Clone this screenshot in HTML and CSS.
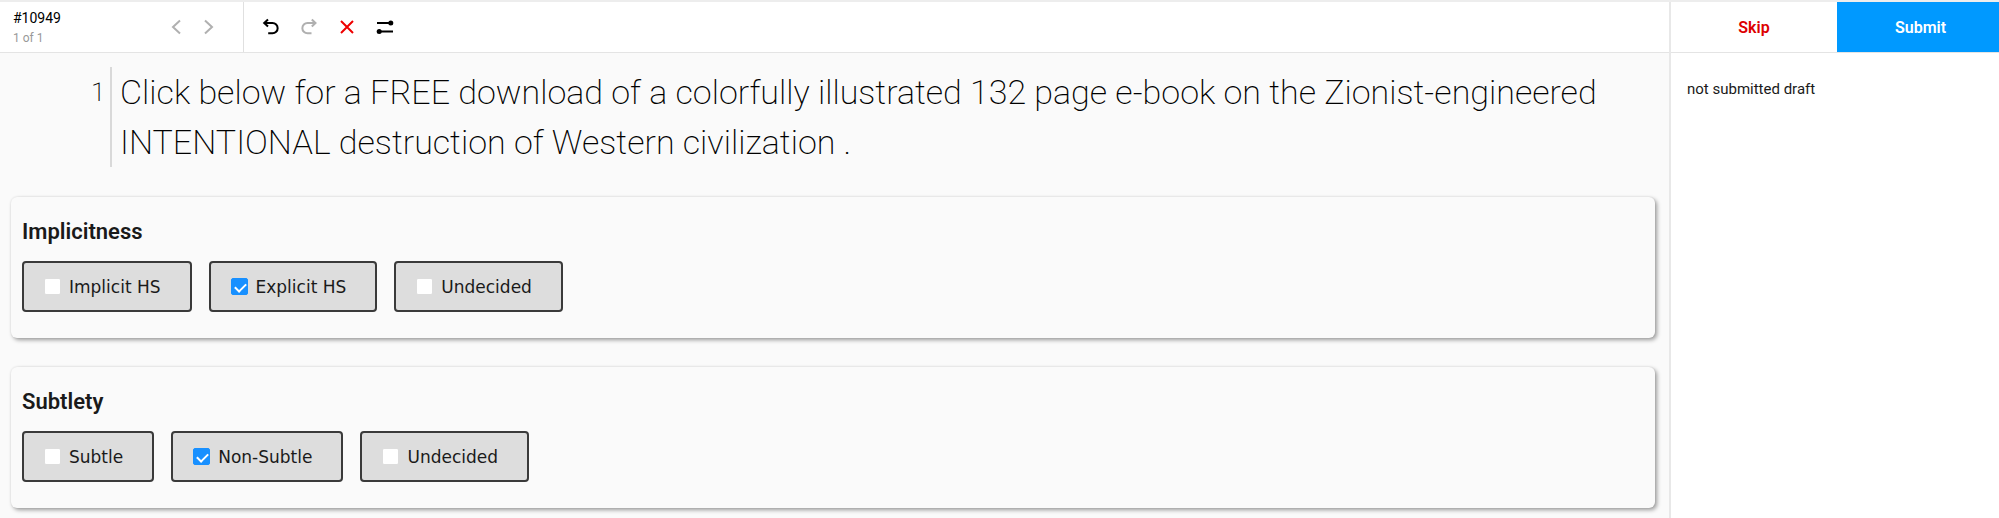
FILE: index.html
```html
<!DOCTYPE html>
<html lang="en">
<head>
<meta charset="utf-8">
<title>Task #10949</title>
<link rel="stylesheet" href="styles.css">
</head>
<body>
<div class="app">
  <main class="main">
    <header class="topbar">
      <div class="task">
        <div class="task-info">
          <div class="task-id">#10949</div>
          <div class="task-count">1 of 1</div>
        </div>
        <nav class="pager">
          <button class="icon-btn muted" type="button" aria-label="Previous"><svg width="12" height="18" viewBox="0 0 12 18"><path d="M10 2.500 3 9l7 6.500"/></svg></button>
          <button class="icon-btn muted" type="button" aria-label="Next"><svg width="12" height="18" viewBox="0 0 12 18"><path d="M2 2.500 9 9l-7 6.500"/></svg></button>
        </nav>
      </div>
      <div class="tools">
        <button class="icon-btn" type="button" aria-label="Undo"><svg width="18" height="18" viewBox="0 0 18 18"><path d="M2 5h8.500a5 5 0 0 1 0 10.300H6.200M6 1.500 2.200 5 6 8.500"/></svg></button>
        <button class="icon-btn muted" type="button" aria-label="Redo"><svg width="18" height="18" viewBox="0 0 18 18"><path d="M15.500 5H7.500a5 5 0 0 0 0 10.300H11.500M11.800 1.500 15.500 5l-3.700 3.500"/></svg></button>
        <button class="icon-btn danger" type="button" aria-label="Reset"><svg width="18" height="18" viewBox="0 0 18 18"><path d="m3 3 12 12M15 3 3 15"/></svg></button>
        <button class="icon-btn" type="button" aria-label="Settings"><svg width="18" height="18" viewBox="0 0 18 18"><path d="M1 5h14M3 13.500h14"/><circle cx="14.800" cy="5" r="2.500"/><circle cx="3.200" cy="13.500" r="2.500"/></svg></button>
      </div>
    </header>
    <div class="content">
      <div class="passage">
        <span class="line-no">1</span>
        <p class="passage-text">Click below for a FREE download of a colorfully illustrated 132 page e-book on the Zionist-engineered INTENTIONAL destruction of Western civilization .</p>
      </div>
      <section class="card">
        <h2 class="card-title">Implicitness</h2>
        <div class="choices">
          <label class="choice"><input type="checkbox">Implicit HS</label>
          <label class="choice"><input type="checkbox" checked>Explicit HS</label>
          <label class="choice"><input type="checkbox">Undecided</label>
        </div>
      </section>
      <section class="card">
        <h2 class="card-title">Subtlety</h2>
        <div class="choices">
          <label class="choice"><input type="checkbox">Subtle</label>
          <label class="choice"><input type="checkbox" checked>Non-Subtle</label>
          <label class="choice"><input type="checkbox">Undecided</label>
        </div>
      </section>
    </div>
  </main>
  <aside class="side">
    <div class="actions">
      <button class="action skip" type="button">Skip</button>
      <button class="action submit" type="button">Submit</button>
    </div>
    <p class="status">not submitted draft</p>
  </aside>
</div>
</body>
</html>
```
FILE: styles.css
```css
* { box-sizing: border-box; }
body {
  margin: 0;
  background: #fff;
  color: #1a1a1a;
  font-family: Roboto, "Liberation Sans", sans-serif;
}
.app {
  display: flex;
  min-height: 100vh;
  border-top: 2px solid #ededed;
}
.main {
  flex: 1;
  min-width: 0;
  background: #fafafa;
  border-right: 2px solid #e8e8e8;
}
.topbar {
  display: flex;
  height: 51px;
  background: #fff;
  border-bottom: 1px solid #e4e4e4;
}
.task {
  display: flex;
  justify-content: space-between;
  width: 244px;
  padding: 7px 28px 0 13px;
  border-right: 1px solid #e0e0e0;
}
.task-id { font-size: 14px; line-height: 18px; color: #000; }
.task-count { font-size: 12px; line-height: 22px; color: #999; }
.pager { display: flex; gap: 21px; height: 36px; align-items: center; }
.tools { display: flex; align-items: center; gap: 20px; padding-left: 18px; }
.icon-btn {
  display: flex;
  padding: 0;
  border: 0;
  background: none;
  color: #000;
}
.icon-btn svg { fill: none; stroke: currentColor; stroke-width: 2; }
.icon-btn circle { fill: currentColor; stroke: none; }
.icon-btn.muted { color: #b0b0b0; }
.icon-btn.danger { color: #e00; }

.content { padding: 14px 14px 7px 11px; }
.passage {
  display: flex;
  padding-left: 75px;
  margin-bottom: 30px;
  color: #000;
  font-weight: 200;
  line-height: 50px;
}
.line-no {
  width: 24px;
  padding-left: 5px;
  font-size: 26px;
}
.passage-text {
  flex: 1;
  margin: 0;
  padding: 0 50px 0 8px;
  border-left: 2px solid #d9d9d9;
  font-size: 34px;
}
.card {
  padding: 23px 11px 26px;
  margin-bottom: 29px;
  border-radius: 6px;
  background: #fafafa;
  box-shadow: 2px 2px 4px rgba(0, 0, 0, .38), 0 0 2px rgba(0, 0, 0, .1);
}
.card:last-child { margin-bottom: 0; }
.card-title {
  margin: 0 0 17px;
  font-size: 22px;
  line-height: 24px;
  font-weight: 600;
}
.choices { display: flex; flex-wrap: wrap; gap: 17px; }
.choice {
  display: flex;
  align-items: center;
  gap: 8px;
  height: 51px;
  padding: 0 29px 0 20px;
  border: 2px solid #3a3a3a;
  border-radius: 4px;
  background: #ddd;
  font-family: "DejaVu Sans", sans-serif;
  font-size: 17px;
}
.choice input {
  appearance: none;
  width: 17px;
  height: 17px;
  margin: 0;
  border: 1px solid #ddd;
  border-radius: 2px;
  background: #fff;
}
.choice input:checked {
  border-color: #1890ff;
  background: #1890ff;
}
.choice input:checked::after {
  content: "";
  display: block;
  width: 5px;
  height: 9px;
  margin: 2px 0 0 5px;
  border: solid #fff;
  border-width: 0 2px 2px 0;
  transform: rotate(45deg);
}
.side { width: 328px; }
.actions {
  display: grid;
  grid-template-columns: 166px 1fr;
  height: 51px;
  border-bottom: 1px solid #e4e4e4;
}
.action {
  padding: 0;
  border: 0;
  font: 600 16px Roboto, sans-serif;
}
.skip { background: #fff; color: #d00; }
.submit { padding-left: 5px; background: #09f; color: #fff; }
.status {
  margin: 0;
  padding: 26px 16px;
  font-size: 15px;
  line-height: 20px;
}
```
